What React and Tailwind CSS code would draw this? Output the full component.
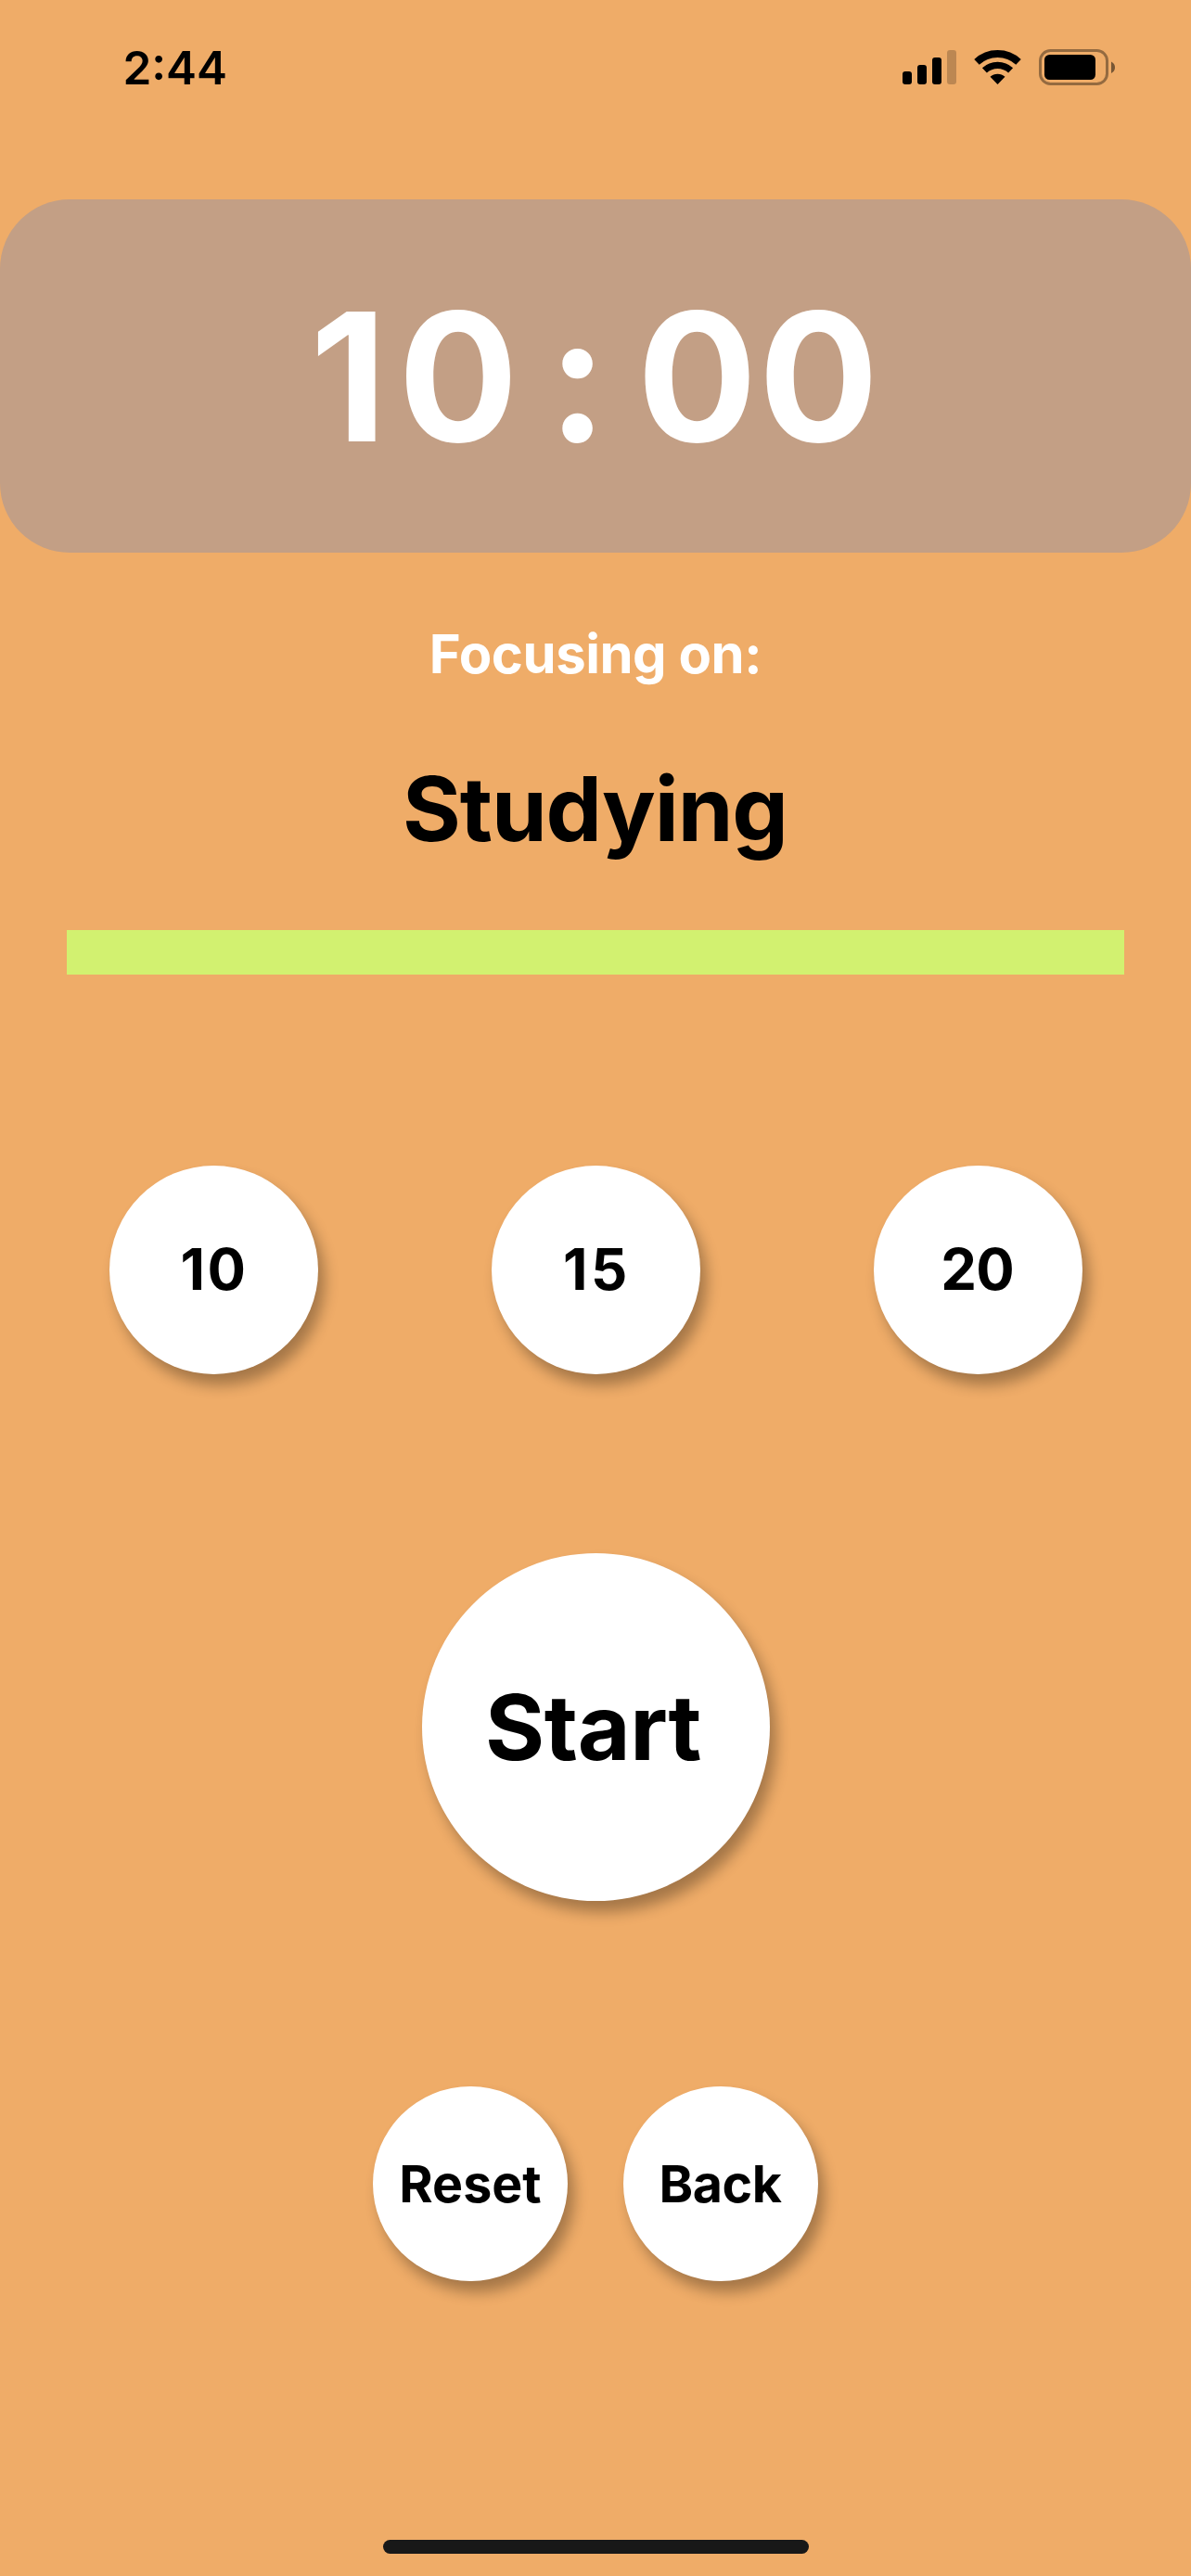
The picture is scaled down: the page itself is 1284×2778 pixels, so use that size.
const round = "flex shrink-0 items-center justify-center rounded-full bg-white font-bold shadow-[7px_12px_15px_rgba(0,0,0,0.31)]";

const presets = [
  { minutes: 10, tracking: "tracking-[2.5px] pl-[1px]" },
  { minutes: 15, tracking: "tracking-[3.6px] pl-[2px]" },
  { minutes: 20, tracking: "tracking-[-0.8px] pr-[2px]" },
];

function StatusIcons() {
  return (
    <svg width="232" height="40" viewBox="972 52 232 40" fill="none">
      <g fill="#000">
        <rect x="973" y="77" width="10" height="14" rx="3" />
        <rect x="989" y="70" width="10" height="21" rx="3" />
        <rect x="1005" y="62" width="10" height="29" rx="3" />
        <rect x="1021" y="54" width="10" height="37" rx="3" opacity=".21" />
      </g>
      <g stroke="#000">
        <path d="M1053 66.900A33 33 0 0 1 1098 66.900" strokeWidth="8" />
        <path d="M1061.400 75.900A20.650 20.650 0 0 1 1089.600 75.900" strokeWidth="7.300" />
      </g>
      <path d="M1075.500 91L1067.500 82.800A11.700 11.700 0 0 1 1083.500 82.800Z" fill="#000" />
      <rect x="1121.500" y="54.500" width="72" height="36" rx="11" stroke="#000" strokeOpacity=".38" strokeWidth="3" />
      <rect x="1126" y="59" width="55" height="27" rx="5.500" fill="#000" />
      <path d="M1198 66.500Q1202 68.500 1202 72.700T1198 79Z" fill="#000" opacity=".5" />
    </svg>
  );
}

export default function App() {
  return (
    <main className="flex h-[2778px] w-[1284px] flex-col items-center overflow-hidden bg-[#efac68] font-['Inter',sans-serif] text-black">
      <header className="flex h-[215px] w-full items-start justify-between pr-[80px] pl-[132.5px]">
        <time className="mt-[42px] text-[49.5px] leading-[62px] font-semibold">2:44</time>
        <div className="mt-[52px]"><StatusIcons /></div>
      </header>
      <section className="flex h-[381px] w-full items-center justify-center gap-[32px] rounded-[75px] bg-[#c39f85] pr-[1px] text-[192px] leading-none font-bold text-white">
        <span className="-mr-[12px] tracking-[12px]">10</span>
        <span>:</span>
        <span className="tracking-[1.5px]">00</span>
      </section>
      <p className="mt-[73px] text-[58px] leading-[72px] font-bold tracking-[-0.47px] text-white">Focusing on:</p>
      <h1 className="mt-[73px] pr-[1px] text-[96px] leading-[116px] font-bold tracking-[-1.08px]">Studying</h1>
      <div className="mt-[73px] h-[48px] w-[1140px] bg-[#d2f170]" />
      <div className="mt-[206px] ml-[1px] flex gap-[187px]">
        {presets.map(({ minutes, tracking }) => (
          <button key={minutes} className={`${round} size-[225px] text-[61.5px] ${tracking}`}>{minutes}</button>
        ))}
      </div>
      <button className={`${round} mt-[193px] ml-[1px] size-[375px] pr-[6px] text-[98px] tracking-[-0.4px]`}>Start</button>
      <div className="mt-[200px] flex gap-[60px]">
        <button className={`${round} size-[210px] text-[55.5px]`}>Reset</button>
        <button className={`${round} size-[210px] pr-[1px] text-[55.5px] tracking-[-0.4px]`}>Back</button>
      </div>
      <div className="mt-[279px] ml-[1px] h-[15px] w-[459px] rounded-full bg-[#181818]" />
    </main>
  );
}
